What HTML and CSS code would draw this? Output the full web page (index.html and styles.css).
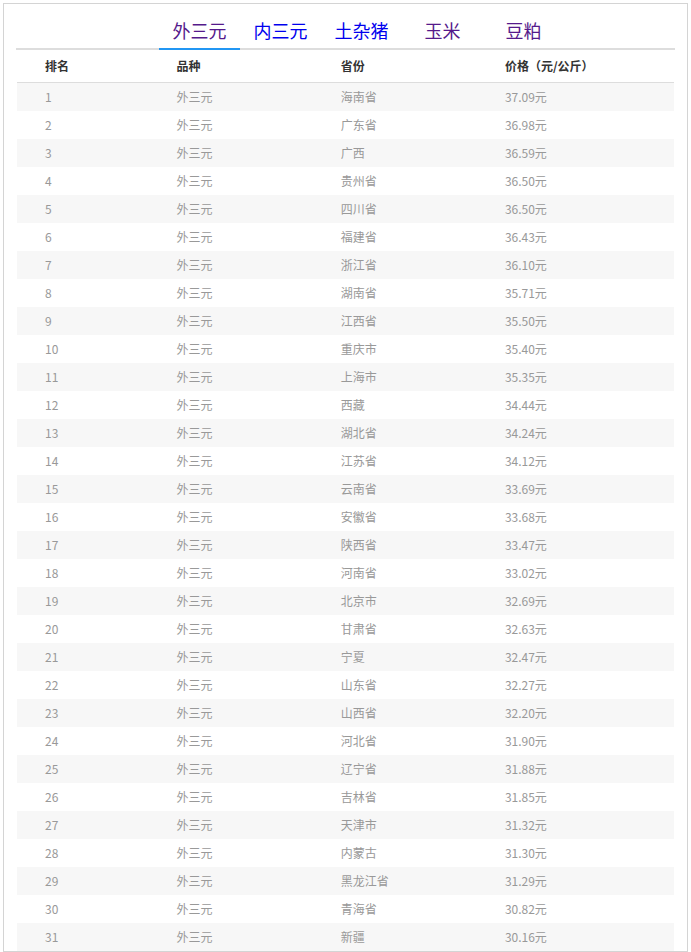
FILE: index.html
```html
<!DOCTYPE html>
<html lang="zh-CN">
<head>
<meta charset="utf-8">
<title>价格排行</title>
<link rel="stylesheet" href="styles.css">
</head>
<body>
<div class="box">
  <div class="tabs">
    <a class="tab active visited">外三元</a>
    <a class="tab">内三元</a>
    <a class="tab">土杂猪</a>
    <a class="tab visited">玉米</a>
    <a class="tab visited">豆粕</a>
  </div>
  <table class="rank">
    <colgroup>
      <col class="c1"><col class="c2"><col class="c3"><col class="c4">
    </colgroup>
    <thead>
      <tr><th>排名</th><th>品种</th><th>省份</th><th>价格（元/公斤）</th></tr>
    </thead>
    <tbody>
      <tr><td>1</td><td>外三元</td><td>海南省</td><td>37.09元</td></tr>
      <tr><td>2</td><td>外三元</td><td>广东省</td><td>36.98元</td></tr>
      <tr><td>3</td><td>外三元</td><td>广西</td><td>36.59元</td></tr>
      <tr><td>4</td><td>外三元</td><td>贵州省</td><td>36.50元</td></tr>
      <tr><td>5</td><td>外三元</td><td>四川省</td><td>36.50元</td></tr>
      <tr><td>6</td><td>外三元</td><td>福建省</td><td>36.43元</td></tr>
      <tr><td>7</td><td>外三元</td><td>浙江省</td><td>36.10元</td></tr>
      <tr><td>8</td><td>外三元</td><td>湖南省</td><td>35.71元</td></tr>
      <tr><td>9</td><td>外三元</td><td>江西省</td><td>35.50元</td></tr>
      <tr><td>10</td><td>外三元</td><td>重庆市</td><td>35.40元</td></tr>
      <tr><td>11</td><td>外三元</td><td>上海市</td><td>35.35元</td></tr>
      <tr><td>12</td><td>外三元</td><td>西藏</td><td>34.44元</td></tr>
      <tr><td>13</td><td>外三元</td><td>湖北省</td><td>34.24元</td></tr>
      <tr><td>14</td><td>外三元</td><td>江苏省</td><td>34.12元</td></tr>
      <tr><td>15</td><td>外三元</td><td>云南省</td><td>33.69元</td></tr>
      <tr><td>16</td><td>外三元</td><td>安徽省</td><td>33.68元</td></tr>
      <tr><td>17</td><td>外三元</td><td>陕西省</td><td>33.47元</td></tr>
      <tr><td>18</td><td>外三元</td><td>河南省</td><td>33.02元</td></tr>
      <tr><td>19</td><td>外三元</td><td>北京市</td><td>32.69元</td></tr>
      <tr><td>20</td><td>外三元</td><td>甘肃省</td><td>32.63元</td></tr>
      <tr><td>21</td><td>外三元</td><td>宁夏</td><td>32.47元</td></tr>
      <tr><td>22</td><td>外三元</td><td>山东省</td><td>32.27元</td></tr>
      <tr><td>23</td><td>外三元</td><td>山西省</td><td>32.20元</td></tr>
      <tr><td>24</td><td>外三元</td><td>河北省</td><td>31.90元</td></tr>
      <tr><td>25</td><td>外三元</td><td>辽宁省</td><td>31.88元</td></tr>
      <tr><td>26</td><td>外三元</td><td>吉林省</td><td>31.85元</td></tr>
      <tr><td>27</td><td>外三元</td><td>天津市</td><td>31.32元</td></tr>
      <tr><td>28</td><td>外三元</td><td>内蒙古</td><td>31.30元</td></tr>
      <tr><td>29</td><td>外三元</td><td>黑龙江省</td><td>31.29元</td></tr>
      <tr><td>30</td><td>外三元</td><td>青海省</td><td>30.82元</td></tr>
      <tr><td>31</td><td>外三元</td><td>新疆</td><td>30.16元</td></tr>
    </tbody>
  </table>
</div>
</body>
</html>
```

FILE: styles.css
```css
html, body {
  margin: 0;
  padding: 0;
  background: #fff;
}
body {
  padding: 3px 3px 0 3px;
  font-family: "Noto Sans CJK SC", "Noto Sans", sans-serif;
}
.box {
  border: 1px solid #d4d4d4;
  padding: 0 12px 0 12px;
}
.tabs {
  display: flex;
  padding-left: 143px;
  border-bottom: 2px solid #dddddd;
}
.tab {
  display: block;
  width: 81px;
  text-align: center;
  font-size: 18px;
  line-height: 35px;
  padding-top: 9px;
  margin-bottom: -2px;
  border-bottom: 2px solid transparent;
  color: #0000ee;
  cursor: pointer;
}
.tab.visited {
  color: #551a8b;
}
.tab.active {
  border-bottom-color: #2196f3;
}
.rank {
  width: 657px;
  margin: 0 1px;
  border-collapse: collapse;
  table-layout: fixed;
  font-size: 12px;
}
.c1 { width: 20%; }
.c2 { width: 25%; }
.c3 { width: 25%; }
.c4 { width: 30%; }
.rank th {
  text-align: left;
  font-weight: bold;
  color: #333;
  height: 32px;
  padding: 0 0 0 28px;
  border-bottom: 1px solid #dddddd;
  line-height: 32px;
}
.rank td {
  height: 28px;
  padding: 0 0 0 28px;
  color: #999;
  line-height: 28px;
}
.rank tbody tr:nth-child(odd) {
  background: #f7f7f7;
}
```
